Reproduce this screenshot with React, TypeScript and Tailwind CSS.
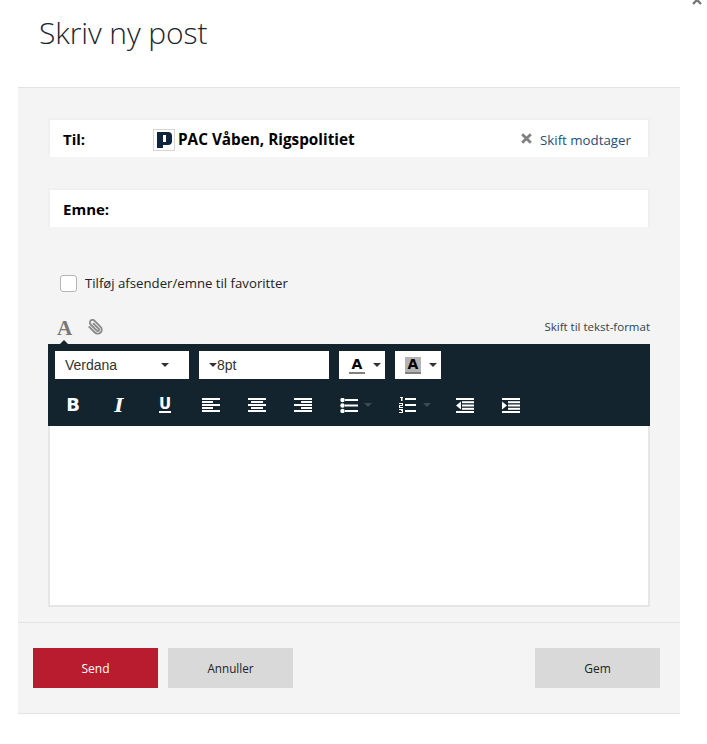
import React from "react";

const Caret = ({ className = "border-t-[#333]" }: { className?: string }) => (
  <span className={`inline-block w-0 h-0 border-x-4 border-x-transparent border-t-4 ${className}`} />
);

const Lines = ({ rows }: { rows: [number, number][] }) => (
  <svg width="18" height="14" viewBox="0 0 18 14" fill="#fff" className="block">
    {rows.map(([x, w], i) => (
      <rect key={i} x={x} y={i * 3} width={w} height="2" />
    ))}
  </svg>
);

const IconBtn = ({ children, className = "w-[46px]" }: { children: React.ReactNode; className?: string }) => (
  <span className={`h-[30px] flex items-center justify-center ${className}`}>{children}</span>
);

const BulletList = () => (
  <svg width="18" height="15" viewBox="0 0 18 15" fill="#fff" className="block">
    <circle cx="2.5" cy="2" r="2.2" />
    <circle cx="2.5" cy="7.5" r="2.2" />
    <circle cx="2.5" cy="13" r="2.2" />
    <rect x="5" y="1" width="13" height="2" />
    <rect x="5" y="6.5" width="13" height="2" />
    <rect x="5" y="12" width="13" height="2" />
  </svg>
);

const NumberList = () => (
  <svg width="17" height="16" viewBox="0 0 17 16" fill="#fff" className="block">
    <rect x="1" y="0" width="3" height="1" />
    <rect x="2" y="0" width="1.5" height="4" />
    <rect x="0" y="6" width="4" height="1" />
    <rect x="3" y="6" width="1" height="2" />
    <rect x="0" y="8" width="4" height="1" />
    <rect x="0" y="9" width="1" height="1" />
    <rect x="0" y="10" width="4" height="1" />
    <rect x="0" y="12" width="4" height="1" />
    <rect x="2" y="13" width="2" height="1" />
    <rect x="0" y="15" width="4" height="1" />
    <rect x="3" y="12" width="1" height="4" />
    <rect x="6" y="1" width="11" height="2" />
    <rect x="6" y="7" width="11" height="2" />
    <rect x="6" y="13" width="11" height="2" />
  </svg>
);

const Indent = ({ out }: { out?: boolean }) => (
  <svg width="18" height="15" viewBox="0 0 18 15" fill="#fff" className="block">
    <rect x="0" y="0" width="18" height="2" />
    <rect x="6" y="3.2" width="12" height="2" />
    <rect x="6" y="6.5" width="12" height="2" />
    <rect x="6" y="9.8" width="12" height="2" />
    <rect x="0" y="13" width="18" height="2" />
    <path d={out ? "M5 3.5v8L0 7.5z" : "M0 3.5v8l5-4z"} />
  </svg>
);

export default function App() {
  return (
    <div className="relative h-[744px] w-[707px] overflow-hidden bg-white font-['Open_Sans',sans-serif] text-[#111]">
      {/* Luk */}
      <svg width="10" height="10" viewBox="0 0 10 10" className="absolute right-[5px] -top-[5px]">
        <path d="M1 1l8 8M9 1L1 9" stroke="#777" strokeWidth="2.4" />
      </svg>

      <h1 className="h-[87px] pl-[39px] pt-[11px] text-[30px] tracking-[-0.1px] leading-[44px] font-light text-[#1a2530]">Skriv ny post</h1>

      <div className="ml-[18px] w-[662px] h-[627px] bg-[#f4f4f4] border-y border-[#e3e3e3]">
        <div className="px-[30px] pt-[30px]">
          {/* Til */}
          <div className="h-[39px] flex items-center bg-white border-2 border-b-0 border-[#f0f0f0] pl-[13px] pr-[17px] w-[602px]">
            <span className="w-[90px] pt-[2px] text-[15px] font-bold text-black">Til:</span>
            <span className="w-[22px] h-[22px] mt-[2px] border border-[#d5d5d5] bg-white flex items-center justify-center">
              <svg width="15" height="16" viewBox="0 0 15 16" className="block">
                <path d="M0 0h11a4 4 0 0 1 4 4v5a4 4 0 0 1-4 4H6v3H0zM6 3v7h3V3z" fill="#0f2440" fillRule="evenodd" />
              </svg>
            </span>
            <span className="ml-[3px] pt-[2px] text-[15.3px] font-bold text-black">PAC Våben, Rigspolitiet</span>
            <svg width="11" height="11" viewBox="0 0 11 11" className="ml-auto">
              <path d="M1.2 1.2l8.6 8.6M9.8 1.2L1.2 9.8" stroke="#808080" strokeWidth="2.8" />
            </svg>
            <span className="ml-[8px] pt-[4px] text-[13.3px] text-[#1f4f78]">Skift modtager</span>
          </div>

          {/* Emne */}
          <div className="mt-[31px] h-[39px] flex items-center bg-white border-2 border-b-0 border-[#f0f0f0] pl-[13px] w-[602px]">
            <span className="pt-[2px] text-[15px] font-bold text-black">Emne:</span>
          </div>

          {/* Favoritter */}
          <label className="mt-[48px] ml-[12px] flex items-center gap-[8px] h-[17px]">
            <span className="w-[17px] h-[17px] rounded-[3px] border border-[#b5b5b5] bg-white" />
            <span className="text-[13.2px] text-[#222]">Tilføj afsender/emne til favoritter</span>
          </label>

          {/* Format */}
          <div className="mt-[25px] h-[27px] flex items-start justify-between w-[602px]">
            <div className="flex items-start">
              <span className="relative ml-[9px] w-[17px] text-[21px] leading-[22px] font-bold font-['Liberation_Serif',serif] text-[#777]">
                A
                <span className="absolute left-[3px] top-[23px] w-0 h-0 border-x-4 border-x-transparent border-b-4 border-b-[#14242f]" />
              </span>
              <svg width="16" height="16" viewBox="0 0 24 24" fill="none" stroke="#8a8a8a" strokeWidth="2.8" className="ml-[13px] mt-[2px] -scale-x-100">
                <path d="M21.4 11.05l-9.2 9.2a6 6 0 0 1-8.5-8.5l9.2-9.2a4 4 0 0 1 5.66 5.66l-9.2 9.2a2 2 0 0 1-2.83-2.83l8.5-8.48" />
              </svg>
            </div>
            <span className="mt-[2px] text-[11.5px] leading-[16px] text-[#33424f]">Skift til tekst-format</span>
          </div>

          {/* Toolbar */}
          <div className="w-[602px] h-[82px] bg-[#14242f] pl-[7px] pt-[7px]">
            <div className="flex gap-[10px] h-[28px] font-['Liberation_Sans',sans-serif]">
              <span className="w-[134px] bg-white flex items-center pl-[10px] pr-[20px] justify-between text-[14px] text-[#333]">
                Verdana
                <Caret />
              </span>
              <span className="w-[130px] bg-white flex items-center pl-[10px] text-[14px] text-[#333]">
                <Caret />
                8pt
              </span>
              <span className="w-[46px] bg-white flex items-center pl-[10px] gap-[8px]">
                <span className="w-[16px] border-b-2 border-[#808080] text-center text-[14px] leading-[15px] font-bold text-black font-['DejaVu_Sans',sans-serif]">A</span>
                <Caret />
              </span>
              <span className="w-[46px] bg-white flex items-center pl-[10px] gap-[8px]">
                <span className="w-[16px] bg-[#b3b3b3] border-b-2 border-[#808080] text-center text-[14px] leading-[15px] font-bold text-black font-['DejaVu_Sans',sans-serif]">A</span>
                <Caret />
              </span>
            </div>
            <div className="mt-[11px] flex items-center -ml-[5px]">
              <IconBtn>
                <span className="text-[18px] leading-none font-bold text-white font-['DejaVu_Sans',sans-serif]">B</span>
              </IconBtn>
              <IconBtn>
                <span className="text-[19px] leading-none font-bold italic text-white font-['DejaVu_Serif',serif]">I</span>
              </IconBtn>
              <IconBtn>
                <span className="w-[12px] border-b-2 border-white text-center text-[15px] leading-[13px] font-bold text-white font-['DejaVu_Sans',sans-serif]">U</span>
              </IconBtn>
              <IconBtn><Lines rows={[[0, 18], [0, 11], [0, 18], [0, 11], [0, 18]]} /></IconBtn>
              <IconBtn><Lines rows={[[0, 18], [3, 12], [0, 18], [3, 12], [0, 18]]} /></IconBtn>
              <IconBtn><Lines rows={[[0, 18], [7, 11], [0, 18], [7, 11], [0, 18]]} /></IconBtn>
              <IconBtn className="w-[58px] gap-[6px] pl-[2px]">
                <BulletList />
                <Caret className="border-t-[#3c4a54]" />
              </IconBtn>
              <IconBtn className="w-[58px] gap-[7px] pl-[3px]">
                <NumberList />
                <Caret className="border-t-[#3c4a54]" />
              </IconBtn>
              <IconBtn><Indent out /></IconBtn>
              <IconBtn><Indent /></IconBtn>
            </div>
          </div>

          {/* Editor */}
          <div className="w-[602px] h-[181px] bg-white border-2 border-t-0 border-[#e6e6e6]" />
        </div>

        <div className="mt-[15px] border-t border-[#e3e3e3] flex pt-[25px] pl-[15px] pr-[20px]">
          <button className="w-[125px] h-[40px] pt-[2px] bg-[#b91c2e] text-white text-[12px]">Send</button>
          <button className="ml-[10px] w-[125px] h-[40px] pt-[2px] bg-[#d9d9d9] text-[#222] text-[11.7px]">Annuller</button>
          <button className="ml-auto w-[125px] h-[40px] pt-[2px] bg-[#d9d9d9] text-[#222] text-[12px]">Gem</button>
        </div>
      </div>
    </div>
  );
}
